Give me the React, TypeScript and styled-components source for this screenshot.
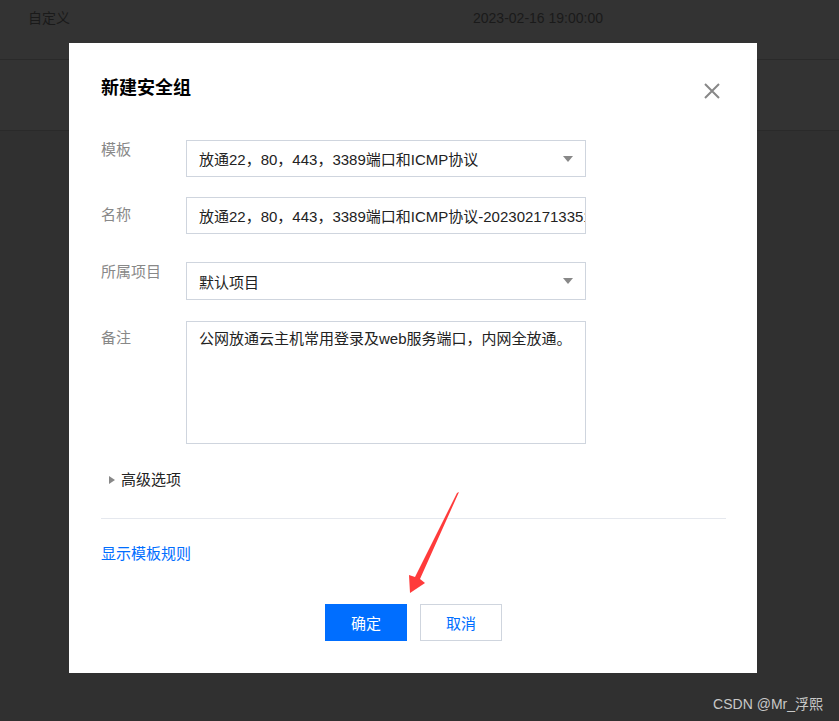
import React from "react";
import styled, { createGlobalStyle } from "styled-components";

const GlobalStyle = createGlobalStyle`
  html, body {
    margin: 0;
    padding: 0;
    background: #303030;
    font-family: "Liberation Sans", "Noto Sans CJK SC", sans-serif;
  }
`;

const Page = styled.div`
  position: relative;
  width: 839px;
  height: 721px;
  overflow: hidden;
  background: #303030;
`;

const TableRow = styled.div<{ $h: number }>`
  display: flex;
  align-items: flex-start;
  height: ${(p) => p.$h}px;
  box-sizing: border-box;
  background: #333333;
  border-bottom: 1px solid #2a2a2a;
  color: #1a1a1a;
  font-size: 14px;
`;

const Cell = styled.div<{ $w: number }>`
  width: ${(p) => p.$w}px;
  padding-top: 9px;
  line-height: 18px;
`;

const Modal = styled.div`
  position: absolute;
  left: 69px;
  top: 43px;
  width: 688px;
  box-sizing: border-box;
  padding: 32px 31px 32px 32px;
  background: #fff;
`;

const Header = styled.div`
  display: flex;
  align-items: center;
  justify-content: space-between;
  height: 26px;
`;

const Title = styled.h3`
  margin: 0;
  font-size: 18px;
  font-weight: 700;
  color: #000;
  line-height: 26px;
`;

const Close = styled.button`
  display: flex;
  align-items: center;
  justify-content: center;
  width: 24px;
  height: 24px;
  margin-top: 6px;
  margin-right: 2px;
  padding: 0;
  border: 0;
  background: none;
`;

const Form = styled.div`
  margin-top: 39px;
`;

const Row = styled.div<{ $gap: number }>`
  display: flex;
  align-items: flex-start;
  margin-bottom: ${(p) => p.$gap}px;
`;

const Label = styled.div<{ $top: number }>`
  width: 85px;
  padding-top: ${(p) => p.$top}px;
  font-size: 15px;
  line-height: 20px;
  color: #888;
`;

const Field = styled.div<{ $h: number }>`
  position: relative;
  display: flex;
  align-items: center;
  width: 400px;
  height: ${(p) => p.$h}px;
  box-sizing: border-box;
  border: 1px solid #cfd5de;
  padding: 0 12px;
  font-size: 15px;
  color: #222;
  white-space: nowrap;
  overflow: hidden;
`;

const Area = styled(Field)`
  align-items: flex-start;
  padding-top: 6px;
  line-height: 22px;
`;

const Caret = styled.span`
  position: absolute;
  right: 12px;
  top: 50%;
  margin-top: -3px;
  width: 0;
  height: 0;
  border-left: 5px solid transparent;
  border-right: 5px solid transparent;
  border-top: 6px solid #888;
`;

const Advanced = styled.div`
  display: flex;
  align-items: center;
  gap: 6px;
  margin-top: 25px;
  padding-left: 8px;
  font-size: 15px;
  line-height: 22px;
  color: #222;
`;

const Arrow = styled.span`
  width: 0;
  height: 0;
  border-top: 4px solid transparent;
  border-bottom: 4px solid transparent;
  border-left: 6px solid #888;
`;

const Divider = styled.hr`
  margin: 27px 0 0;
  border: 0;
  border-top: 1px solid #e5e8ee;
`;

const Link = styled.a`
  display: block;
  margin-top: 24px;
  font-size: 15px;
  line-height: 22px;
  color: #006eff;
  text-decoration: none;
`;

const Footer = styled.div`
  display: flex;
  justify-content: center;
  gap: 13px;
  margin-top: 39px;
`;

const Button = styled.button<{ $primary?: boolean }>`
  width: 82px;
  height: 37px;
  box-sizing: border-box;
  font-family: inherit;
  font-size: 15px;
  border: 1px solid ${(p) => (p.$primary ? "#006eff" : "#cfd5de")};
  background: ${(p) => (p.$primary ? "#006eff" : "#fff")};
  color: ${(p) => (p.$primary ? "#fff" : "#006eff")};
`;

const Annotation = styled.svg`
  position: absolute;
  left: 400px;
  top: 488px;
  pointer-events: none;
`;

const Watermark = styled.div`
  position: absolute;
  right: 16px;
  bottom: 8px;
  font-size: 14px;
  color: #c8c8c8;
`;

export default function App() {
  return (
    <Page>
      <GlobalStyle />
      <TableRow $h={60}>
        <Cell $w={445} style={{ paddingLeft: 28 }}>自定义</Cell>
        <Cell $w={300}>2023-02-16 19:00:00</Cell>
      </TableRow>
      <TableRow $h={71} />

      <Modal>
        <Header>
          <Title>新建安全组</Title>
          <Close>
            <svg width="16" height="16" viewBox="0 0 16 16">
              <path d="M1 1L15 15M15 1L1 15" stroke="#888" strokeWidth="2" />
            </svg>
          </Close>
        </Header>
        <Form>
          <Row $gap={20}>
            <Label $top={0}>模板</Label>
            <Field $h={37}>
              放通22，80，443，3389端口和ICMP协议
              <Caret />
            </Field>
          </Row>
          <Row $gap={28}>
            <Label $top={8}>名称</Label>
            <Field $h={37}>放通22，80，443，3389端口和ICMP协议-20230217133512</Field>
          </Row>
          <Row $gap={21}>
            <Label $top={0}>所属项目</Label>
            <Field $h={38}>
              默认项目
              <Caret />
            </Field>
          </Row>
          <Row $gap={0}>
            <Label $top={7}>备注</Label>
            <Area $h={123}>公网放通云主机常用登录及web服务端口，内网全放通。</Area>
          </Row>
        </Form>
        <Advanced>
          <Arrow />
          高级选项
        </Advanced>
        <Divider />
        <Link href="#">显示模板规则</Link>
        <Footer>
          <Button $primary>确定</Button>
          <Button>取消</Button>
        </Footer>
      </Modal>

      <Annotation width="65" height="110" viewBox="0 0 65 110">
        <polygon
          points="59,4 20,91 25,95 10,105 9,87 15,89 57,5"
          fill="#ff3b3b"
        />
      </Annotation>

      <Watermark>CSDN @Mr_浮熙</Watermark>
    </Page>
  );
}
